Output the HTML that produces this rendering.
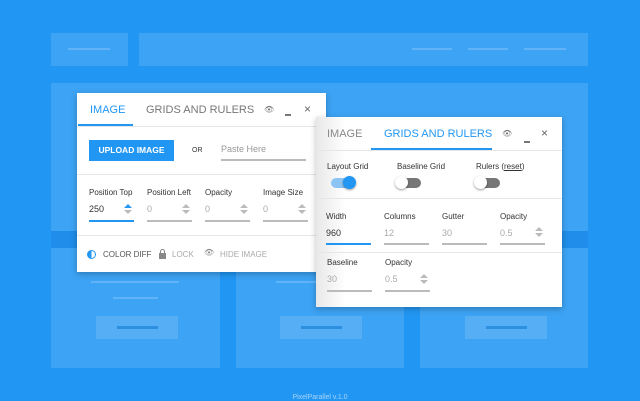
<!DOCTYPE html>
<html><head><meta charset="utf-8"><style>
*{margin:0;padding:0;box-sizing:border-box}
body{width:640px;height:400px;background:#2196f3;position:relative;overflow:hidden;font-family:"Liberation Sans",sans-serif}
.b{position:absolute;background:rgba(255,255,255,.13)}
.l{position:absolute;background:rgba(255,255,255,.18);height:2px}
.p{position:absolute;background:#fff;box-shadow:0 2px 6px rgba(0,0,0,.25)}
.t{position:absolute;font-size:8px;color:#333;white-space:nowrap}
.g{color:#aaa}
.u{position:absolute;height:1.5px;background:#bbb}
.d{position:absolute;height:1px;background:#e6e6e6}
.tab{position:absolute;font-size:11px;white-space:nowrap}
.arr{position:absolute;width:0;height:0;border-left:4px solid transparent;border-right:4px solid transparent}
.up{border-bottom:4px solid #bbb}.dn{border-top:4px solid #bbb}
.tg{position:absolute;width:24px;height:10px;border-radius:5px;background:#777}
.kn{position:absolute;width:13px;height:13px;border-radius:50%;background:#fff;box-shadow:0 1px 2px rgba(0,0,0,.4);top:-2px}
</style></head><body>
<div class="b" style="left:51px;top:33px;width:77px;height:33px"></div>
<div class="b" style="left:139px;top:33px;width:449px;height:33px"></div>
<div class="l" style="left:68px;top:48px;width:42px"></div>
<div class="l" style="left:412px;top:48px;width:40px"></div>
<div class="l" style="left:468px;top:48px;width:40px"></div>
<div class="l" style="left:524px;top:48px;width:42px"></div>
<div class="b" style="left:51px;top:83px;width:537px;height:148px"></div>
<div style="position:absolute;left:51px;top:231px;width:537px;height:17px;background:rgba(0,0,80,.06)"></div>
<div class="b" style="left:51px;top:248px;width:169px;height:120px"></div>
<div class="b" style="left:236px;top:248px;width:168px;height:120px"></div>
<div class="b" style="left:420px;top:248px;width:168px;height:120px"></div>
<div class="l" style="left:91px;top:281px;width:88px"></div><div class="l" style="left:113px;top:297px;width:45px"></div>
<div class="b" style="left:96px;top:316px;width:82px;height:23px"></div><div style="position:absolute;left:117px;top:326px;width:41px;height:3px;background:#2c8fe0"></div>
<div class="l" style="left:276px;top:281px;width:88px"></div>
<div class="b" style="left:280px;top:316px;width:82px;height:23px"></div><div style="position:absolute;left:301px;top:326px;width:41px;height:3px;background:#2c8fe0"></div>
<div class="b" style="left:465px;top:316px;width:82px;height:23px"></div><div style="position:absolute;left:486px;top:326px;width:41px;height:3px;background:#2c8fe0"></div>
<div style="position:absolute;left:0;top:394px;width:640px;text-align:center;font-size:7px;color:rgba(255,255,255,.6)">PixelParallel v.1.0</div>

<div class="p" style="left:77px;top:93px;width:249px;height:179px">
<div class="tab" style="left:13px;top:11px;color:#2196f3">IMAGE</div>
<div style="position:absolute;left:1px;top:31px;width:55px;height:2px;background:#2196f3"></div>
<div class="tab" style="left:69px;top:11px;color:#777">GRIDS AND RULERS</div>
<div class="t g" style="left:187px;top:12px;color:#777">👁</div>
<div style="position:absolute;left:208px;top:21px;width:6px;height:1.5px;background:#777"></div>
<div class="t" style="left:227px;top:9px;font-size:12px;color:#666">×</div>
<div class="d" style="left:0;top:33px;width:249px"></div>
<div style="position:absolute;left:12px;top:47px;width:85px;height:21px;background:#2196f3;color:#fff;font-size:8.5px;font-weight:bold;text-align:center;line-height:21px">UPLOAD IMAGE</div>
<div class="t" style="left:115px;top:54px;font-size:7px">OR</div>
<div class="t g" style="left:144px;top:51px;font-size:9px;color:#999">Paste Here</div>
<div class="u" style="left:144px;top:66px;width:85px"></div>
<div class="d" style="left:0;top:81px;width:249px"></div>
<div class="t" style="left:12px;top:95px">Position Top</div>
<div class="t" style="left:70px;top:95px">Position Left</div>
<div class="t" style="left:128px;top:95px">Opacity</div>
<div class="t" style="left:186px;top:95px">Image Size</div>
<div class="t" style="left:12px;top:111px;font-size:9px">250</div>
<div class="t g" style="left:70px;top:111px;font-size:9px">0</div>
<div class="t g" style="left:128px;top:111px;font-size:9px">0</div>
<div class="t g" style="left:186px;top:111px;font-size:9px">0</div>
<div class="arr up" style="left:47px;top:111px;border-bottom-color:#2196f3"></div><div class="arr dn" style="left:47px;top:117px"></div>
<div class="arr up" style="left:105px;top:111px"></div><div class="arr dn" style="left:105px;top:117px"></div>
<div class="arr up" style="left:163px;top:111px"></div><div class="arr dn" style="left:163px;top:117px"></div>
<div class="arr up" style="left:221px;top:111px"></div><div class="arr dn" style="left:221px;top:117px"></div>
<div class="u" style="left:12px;top:127px;width:45px;background:#2196f3"></div>
<div class="u" style="left:70px;top:127px;width:45px"></div>
<div class="u" style="left:128px;top:127px;width:45px"></div>
<div class="u" style="left:186px;top:127px;width:45px"></div>
<div class="d" style="left:0;top:142px;width:249px"></div>
<div style="position:absolute;left:10px;top:157px;width:9px;height:9px;border-radius:50%;border:1.5px solid #2196f3;background:linear-gradient(90deg,#2196f3 50%,#fff 50%)"></div>
<div class="t" style="left:26px;top:157px;color:#555">COLOR DIFF</div>
<div style="position:absolute;left:82px;top:160px;width:7px;height:6px;background:#888"></div>
<div style="position:absolute;left:83px;top:156px;width:5px;height:5px;border:1.5px solid #888;border-bottom:none;border-radius:3px 3px 0 0"></div>
<div class="t g" style="left:95px;top:157px">LOCK</div>
<div class="t g" style="left:127px;top:155px;color:#888">👁</div>
<div class="t g" style="left:143px;top:157px">HIDE IMAGE</div>
</div>

<div class="p" style="left:316px;top:117px;width:246px;height:190px;background:linear-gradient(90deg,#e8e8e8,#fff 30px)">
<div class="tab" style="left:11px;top:11px;color:#888">IMAGE</div>
<div class="tab" style="left:68px;top:11px;color:#2196f3">GRIDS AND RULERS</div>
<div style="position:absolute;left:55px;top:31px;width:121px;height:2px;background:#2196f3"></div>
<div class="t" style="left:186px;top:12px;color:#777">👁</div>
<div style="position:absolute;left:208px;top:24px;width:6px;height:1.5px;background:#777"></div>
<div class="t" style="left:225px;top:9px;font-size:12px;color:#666">×</div>
<div class="d" style="left:0;top:33px;width:246px"></div>
<div class="t" style="left:11px;top:45px">Layout Grid</div>
<div class="t" style="left:81px;top:45px">Baseline Grid</div>
<div class="t" style="left:160px;top:45px">Rulers (<u>reset</u>)</div>
<div class="tg" style="left:15px;top:61px;background:#8cc4f4"><div class="kn" style="left:12px;background:#2196f3"></div></div>
<div class="tg" style="left:81px;top:61px"><div class="kn" style="left:-2px"></div></div>
<div class="tg" style="left:160px;top:61px"><div class="kn" style="left:-2px"></div></div>
<div class="d" style="left:0;top:81px;width:246px"></div>
<div class="t" style="left:10px;top:95px">Width</div>
<div class="t" style="left:68px;top:95px">Columns</div>
<div class="t" style="left:126px;top:95px">Gutter</div>
<div class="t" style="left:184px;top:95px">Opacity</div>
<div class="t" style="left:10px;top:111px;font-size:9px">960</div>
<div class="t g" style="left:68px;top:111px;font-size:9px">12</div>
<div class="t g" style="left:126px;top:111px;font-size:9px">30</div>
<div class="t g" style="left:184px;top:111px;font-size:9px">0.5</div>
<div class="arr up" style="left:219px;top:110px"></div><div class="arr dn" style="left:219px;top:116px"></div>
<div class="u" style="left:10px;top:126px;width:45px;background:#2196f3"></div>
<div class="u" style="left:68px;top:126px;width:45px"></div>
<div class="u" style="left:126px;top:126px;width:45px"></div>
<div class="u" style="left:184px;top:126px;width:45px"></div>
<div class="d" style="left:0;top:135px;width:246px"></div>
<div class="t" style="left:11px;top:141px">Baseline</div>
<div class="t" style="left:69px;top:141px">Opacity</div>
<div class="t g" style="left:11px;top:157px;font-size:9px">30</div>
<div class="t g" style="left:69px;top:157px;font-size:9px">0.5</div>
<div class="arr up" style="left:104px;top:157px"></div><div class="arr dn" style="left:104px;top:163px"></div>
<div class="u" style="left:11px;top:173px;width:45px"></div>
<div class="u" style="left:69px;top:173px;width:45px"></div>
</div>
</body></html>
